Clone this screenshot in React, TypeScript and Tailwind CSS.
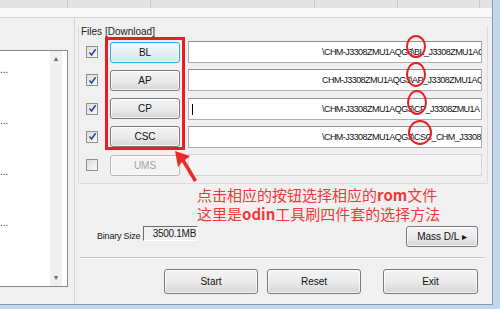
import React from 'react';

const ui = { fontFamily: '"Liberation Sans Narrow", "Liberation Sans", Arial, sans-serif' };
const cjk = { fontFamily: '"Noto Sans CJK SC", "Noto Sans", sans-serif' };

const files = [
  { key: 'BL', path: '\\CHM-J3308ZMU1AQG3\\BL_J3308ZMU1AQ', focused: true },
  { key: 'AP', path: 'CHM-J3308ZMU1AQG3\\AP_J3308ZMU1AQ' },
  { key: 'CP', path: '\\CHM-J3308ZMU1AQG3\\CP_J3308ZMU1A', caret: true },
  { key: 'CSC', path: '\\CHM-J3308ZMU1AQG3\\CSC_CHM_J3308' },
];

function Check({ on }: { on: boolean }) {
  return (
    <div className="w-[12px] h-[12px] border border-[#8e8f8f] bg-gradient-to-br from-[#dcdcdc] to-[#fbfbfb] flex items-center justify-center">
      {on && (
        <svg width="9" height="9" viewBox="0 0 9 9">
          <path d="M1.5 4.5 L3.6 7 L7.6 1.2" fill="none" stroke="#2c4a8f" strokeWidth="1.6" />
        </svg>
      )}
    </div>
  );
}

function WinButton({ label, className = '', focused = false, disabled = false }: { label: string; className?: string; focused?: boolean; disabled?: boolean }) {
  const look = disabled
    ? 'border-[#b5b8bb] bg-[#f4f4f4] text-[#a3a3a3]'
    : focused
    ? 'border-[#2aa7dc] bg-gradient-to-b from-[#f3f8fb] to-[#d7e6ee] text-[#111]'
    : 'border-[#7a7a7a] bg-gradient-to-b from-[#f4f4f4] via-[#ebebeb] to-[#d6d6d6] text-[#111]';
  return (
    <div className={`flex items-center justify-center rounded-[3px] border text-[10px] shadow-[inset_0_0_0_1px_rgba(255,255,255,0.7)] ${look} ${className}`}>
      {label}
    </div>
  );
}

export default function App() {
  return (
    <div className="relative w-[500px] h-[309px] overflow-hidden bg-[#c3d8ee]" style={ui}>
      <div className="w-[493px] h-[305px] bg-[#f0f0f0] border-r border-b border-[#8d9aa8] flex flex-col">
        {/* tab strip, cut off at top */}
        <div className="h-[8px] flex bg-[#e2e2e2]">
          <div className="w-[68px] border-r border-[#c9c9c9]" />
          <div className="w-[83px] border-r border-[#c9c9c9]" />
          <div className="w-[164px] border-r border-[#c9c9c9]" />
          <div className="w-[83px] border-r border-[#c9c9c9]" />
          <div className="w-[82px] border-r border-[#c9c9c9]" />
          <div className="flex-1" />
        </div>
        <div className="h-[10px] bg-[#f8f8f8] border-b border-[#d8d8d8]" />

        <div className="flex-1 flex">
          {/* left log list */}
          <div className="w-[75px] border-r border-[#d6d6d6] pt-[32px] pb-[17px] flex">
            <div className="w-[68px] bg-white border-t border-r border-b border-[#828790] flex text-[10px] text-[#333]">
              <div className="w-[50px] flex flex-col pt-[12px] gap-[38px]">
                <span className="leading-[13px]">...</span>
                <span className="leading-[13px]">...</span>
                <span className="leading-[13px]">...</span>
                <span className="leading-[13px]">...</span>
              </div>
              <div className="w-[12px] bg-[#f0f0f0] flex flex-col justify-between items-center text-[7px] text-[#666] py-[3px]">
                <span>▲</span>
                <span>▼</span>
              </div>
            </div>
          </div>

          {/* right side */}
          <div className="flex-1 flex flex-col">
            <div className="ml-[3px] mr-[4px] mt-[8px] pl-[7px] pb-[7px] border-r border-b border-l border-[#dcdcdc] rounded-b-[2px]">
              <div className="text-[10px] leading-[12px] text-[#222] -ml-[5px]">Files [Download]</div>
              <div className="mt-[3px] flex flex-col gap-[6.3px]">
                {files.map((f) => (
                  <div key={f.key} className="flex items-center h-[22px]">
                    <Check on />
                    <WinButton label={f.key} focused={f.focused} className="ml-[12px] w-[70px] h-[21px]" />
                    <div className="ml-[8px] w-[294px] h-[22px] bg-white border border-[#abadb3] border-t-[#8e9297] overflow-hidden relative">
                      {f.caret && <div className="absolute left-[3px] top-[5px] w-px h-[11px] bg-black" />}
                      <div className="pl-[133px] text-[9px] tracking-[-0.55px] leading-[20px] whitespace-nowrap text-[#111]">{f.path}</div>
                    </div>
                  </div>
                ))}
                <div className="flex items-center h-[22px]">
                  <Check on={false} />
                  <WinButton label="UMS" disabled className="ml-[12px] w-[70px] h-[21px]" />
                  <div className="ml-[8px] w-[294px] h-[22px] bg-[#f5f5f5] border border-[#d5d5d5]" />
                </div>
              </div>
            </div>

            <div className="mt-[42px] flex items-start">
              <span className="ml-[22px] w-[46px] mt-[4px] text-[9px] tracking-[-0.2px] text-[#222]">Binary Size</span>
              <div className="w-[55px] h-[15px] border border-[#a0a0a0] border-t-[#6d6d6d] border-l-[#6d6d6d] border-b-white border-r-white flex items-center justify-end pr-[1px] text-[10px] tracking-[-0.3px] text-[#222]">
                3500.1MB
              </div>
              <WinButton label="Mass D/L ▸" className="ml-auto mr-[14px] w-[72px] h-[21px]" />
            </div>

            <div className="mt-[10px] ml-[5px] mr-[7px] h-[2px] border-t border-[#c9c9c9] border-b border-b-white" />

            <div className="mt-[10px] flex">
              <WinButton label="Start" className="ml-[89px] w-[94px] h-[25px]" />
              <WinButton label="Reset" className="ml-[9px] w-[94px] h-[25px]" />
              <WinButton label="Exit" className="ml-[22px] w-[95px] h-[25px]" />
            </div>
          </div>
        </div>
      </div>

      {/* annotation overlay */}
      <div className="absolute left-[105px] top-[37px] w-[80px] h-[113px] border-[3px] border-[#ec1c24]" />
      <div className="absolute left-[406px] top-[35px] w-[20px] h-[23px] rounded-[50%] border-2 border-[#ec1c24]" />
      <div className="absolute left-[406px] top-[62px] w-[20px] h-[25px] rounded-[50%] border-2 border-[#ec1c24]" />
      <div className="absolute left-[407px] top-[90px] w-[20px] h-[25px] rounded-[50%] border-2 border-[#ec1c24]" />
      <div className="absolute left-[408px] top-[120px] w-[24px] h-[25px] rounded-[50%] border-2 border-[#ec1c24]" />
      <svg className="absolute left-[170px] top-[148px]" width="30" height="36" viewBox="0 0 30 36">
        <polygon points="5,3 20,8 15,12 27,32 24,34 12,14 8,19" fill="#ec2a2a" />
      </svg>
      <div className="absolute left-[197px] top-[185px] text-[15px] leading-[19px] text-[#f03a3a]" style={cjk}>
        <div>点击相应的按钮选择相应的<b>rom</b>文件</div>
        <div>这里是<b>odin</b>工具刷四件套的选择方法</div>
      </div>
    </div>
  );
}
